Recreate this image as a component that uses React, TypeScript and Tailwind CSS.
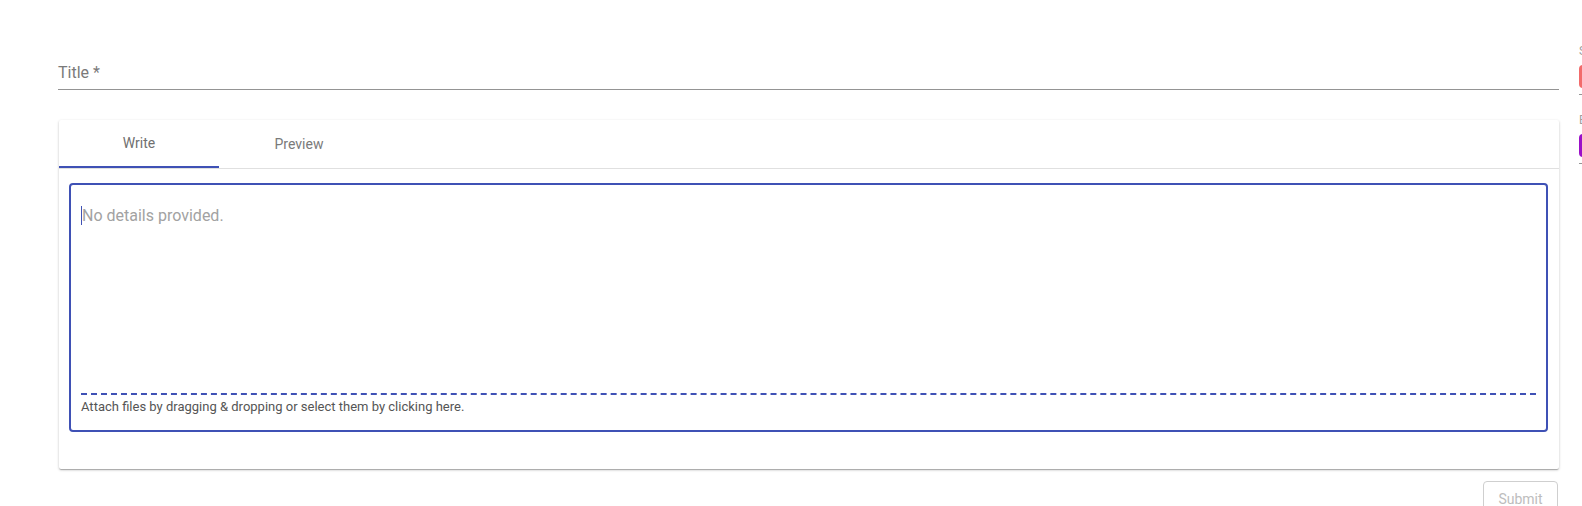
import React from "react";

const font = { fontFamily: "Roboto, 'Liberation Sans', sans-serif" };

function SideField({ label, color }: { label: string; color: string }) {
    return (
        <div className="flex flex-col">
            <p className="text-[12px] leading-[14px] text-[#9e9e9e]">{label}</p>
            <div className="mt-[7px] flex items-center pb-[6px] border-b border-[#949494]">
                <div className={`h-[23px] w-[120px] rounded-[4px] ${color}`} />
            </div>
        </div>
    );
}

export default function App() {
    return (
        <div
            style={font}
            className="relative w-[1582px] h-[506px] overflow-hidden bg-white"
        >
            <div className="flex w-[1800px] pl-[59px]">
                <div className="flex flex-col w-[1500px]">
                    {/* title field */}
                    <div className="pt-[63px] border-b border-[#949494] pb-[7px] ml-[-1px]">
                        <p className="text-[16px] leading-[19px] text-[#7a7a7a]">Title *</p>
                    </div>

                    {/* editor card */}
                    <div className="mt-[30px] h-[349px] bg-white rounded-[2px] shadow-[0_1px_3px_0_rgba(0,0,0,0.2),0_1px_1px_0_rgba(0,0,0,0.14),0_2px_1px_-1px_rgba(0,0,0,0.12)] flex flex-col">
                        <div className="flex border-b border-[#e0e0e0] h-[49px]">
                            <div className="w-[160px] h-[48px] flex items-center justify-center text-[14px] text-[#707070] border-b-2 border-[#3f51b5]">
                                Write
                            </div>
                            <div className="w-[160px] h-[48px] flex items-center justify-center text-[14px] text-[#7a7a7a]">
                                Preview
                            </div>
                        </div>
                        <div className="px-[10px] pt-[14px]">
                            <div className="mr-[1px] h-[249px] border-2 border-[#3f51b5] rounded-[4px] px-[10px] flex flex-col">
                                <div className="flex-1 pt-[21px] flex items-start">
                                    <span className="w-px h-[19px] bg-[#3f51b5]" />
                                    <p className="text-[16px] leading-[19px] text-[#a2a2a2]">No details provided.</p>
                                </div>
                                <div className="border-t-2 border-dashed border-[#3f51b5] pt-[4px] pb-[16px]">
                                    <p className="text-[13px] leading-[15px] text-[#555555]">
                                        Attach files by dragging &amp; dropping or select them by clicking here.
                                    </p>
                                </div>
                            </div>
                        </div>
                    </div>

                    <div className="flex justify-end mt-[12px]">
                        <button className="w-[75px] h-[36px] border border-[#cfcfcf] rounded-[4px] text-[14px] text-[#bdbdbd] mr-[1px]">
                            Submit
                        </button>
                    </div>
                </div>

                {/* side column */}
                <div className="ml-[20px] w-[200px] pt-[44px] flex flex-col gap-[18px]">
                    <SideField label="Status" color="bg-[#f26b6b]" />
                    <SideField label="Estimate" color="bg-[#9b10c8]" />
                </div>
            </div>
        </div>
    );
}
